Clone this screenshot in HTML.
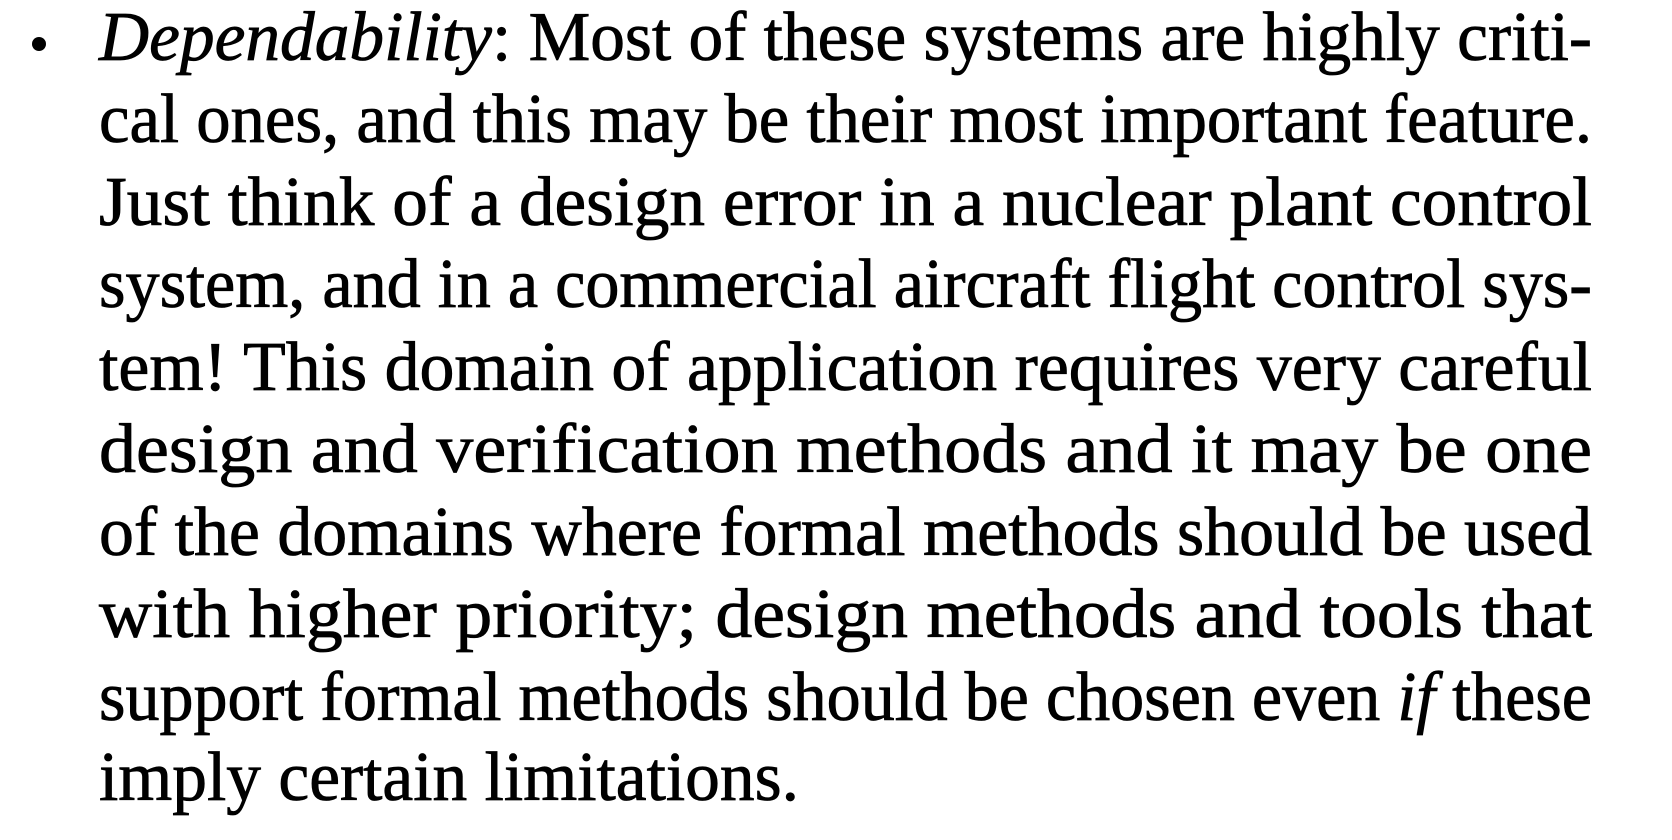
<!DOCTYPE html>
<html><head><meta charset="utf-8"><style>
html,body{margin:0;padding:0;background:#fff;width:1672px;height:840px;overflow:hidden}
svg{display:block}
text{font-family:"Liberation Serif","Times New Roman",serif;font-size:70px;fill:#000;stroke:#000;stroke-width:0.8}
</style></head><body>
<svg width="1672" height="840" viewBox="0 0 1672 840">
<circle cx="39" cy="44" r="7" fill="#000"/>
<text x="99" y="60" textLength="1493" lengthAdjust="spacingAndGlyphs"><tspan font-style="italic">Dependability</tspan>: Most of these systems are highly criti-</text>
<text x="99" y="142" textLength="1493" lengthAdjust="spacingAndGlyphs">cal ones, and this may be their most important feature.</text>
<text x="99" y="225" textLength="1493" lengthAdjust="spacingAndGlyphs">Just think of a design error in a nuclear plant control</text>
<text x="99" y="307" textLength="1493" lengthAdjust="spacingAndGlyphs">system, and in a commercial aircraft flight control sys-</text>
<text x="99" y="390" textLength="1493" lengthAdjust="spacingAndGlyphs">tem! This domain of application requires very careful</text>
<text x="99" y="472" textLength="1493" lengthAdjust="spacingAndGlyphs">design and verification methods and it may be one</text>
<text x="99" y="555" textLength="1493" lengthAdjust="spacingAndGlyphs">of the domains where formal methods should be used</text>
<text x="99" y="637" textLength="1493" lengthAdjust="spacingAndGlyphs">with higher priority; design methods and tools that</text>
<text x="99" y="720" textLength="1493" lengthAdjust="spacingAndGlyphs">support formal methods should be chosen even <tspan font-style="italic">if</tspan> these</text>
<text x="99" y="800" textLength="700" lengthAdjust="spacingAndGlyphs">imply certain limitations.</text>
</svg>
</body></html>
